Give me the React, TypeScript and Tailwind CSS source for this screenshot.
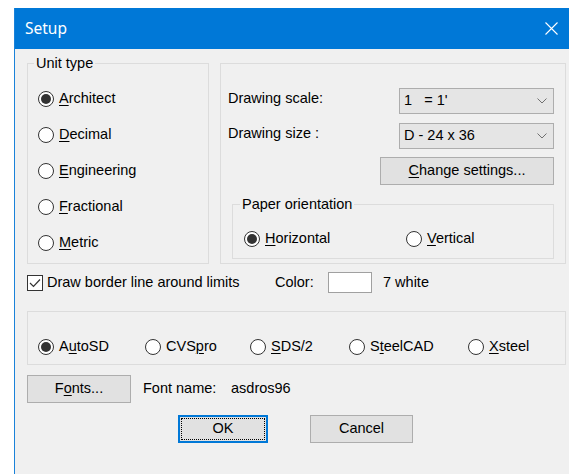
import type { ReactNode } from "react";

// Underlined mnemonic letter, Windows style
function K({ children }: { children: ReactNode }) {
  return <span className="underline decoration-1 underline-offset-[2px]">{children}</span>;
}

function Radio({ checked, children }: { checked?: boolean; children: ReactNode }) {
  return (
    <span className="flex items-center">
      <span className="flex h-[16px] w-[16px] shrink-0 items-center justify-center rounded-full border border-[#333333] bg-white">
        {checked && <span className="h-[10px] w-[10px] rounded-full bg-[#333333]" />}
      </span>
      <span className="ml-[5px] whitespace-nowrap">{children}</span>
    </span>
  );
}

function Dropdown({ value }: { value: string }) {
  return (
    <div className="flex h-[26px] w-[155px] items-center justify-between border border-[#adadad] bg-[#e5e5e5] pl-[4px] pr-[6px]">
      <span className="whitespace-pre">{value}</span>
      <svg width="10" height="6" viewBox="0 0 10 6" fill="none">
        <path d="M0.5 0.5 L5 5 L9.5 0.5" stroke="#707070" strokeWidth="1" />
      </svg>
    </div>
  );
}

function Button({ className, children }: { className: string; children: ReactNode }) {
  return (
    <div className={`flex h-[28px] items-center justify-center border border-[#adadad] bg-[#e1e1e1] ${className}`}>
      {children}
    </div>
  );
}

export default function App() {
  return (
    <div className="h-[474px] overflow-hidden bg-white pl-[14px] pt-[8px] font-['Liberation_Sans',Arial,sans-serif] text-[14.5px] text-black">
      <div className="flex h-full flex-col border-l border-[#1a82d9]">
        {/* title bar */}
        <div className="flex h-[41px] shrink-0 items-center justify-between bg-[#0078d7] pl-[10px] pr-[11px] text-white">
          <span className="font-['Noto_Sans',sans-serif] text-[15.5px]">Setup</span>
          <svg width="13" height="13" viewBox="0 0 13 13" fill="none">
            <path d="M0.5 0.5 L12.5 12.5 M12.5 0.5 L0.5 12.5" stroke="white" strokeWidth="1.1" />
          </svg>
        </div>

        <div className="flex flex-1 flex-col bg-[#f0f0f0] pl-[12px] pt-[6px]">
          <div className="flex items-start gap-[11px]">
            <fieldset className="h-[209px] w-[182px] border border-[#dcdcdc] px-[6px]">
              <legend className="px-[2px] leading-[16px]">Unit type</legend>
              <div className="ml-[4px] mt-[10px] flex flex-col">
                <div className="flex h-[36px] items-center">
                  <Radio checked>
                    <K>A</K>rchitect
                  </Radio>
                </div>
                <div className="flex h-[36px] items-center">
                  <Radio>
                    <K>D</K>ecimal
                  </Radio>
                </div>
                <div className="flex h-[36px] items-center">
                  <Radio>
                    <K>E</K>ngineering
                  </Radio>
                </div>
                <div className="flex h-[36px] items-center">
                  <Radio>
                    <K>F</K>ractional
                  </Radio>
                </div>
                <div className="flex h-[36px] items-center">
                  <Radio>
                    <K>M</K>etric
                  </Radio>
                </div>
              </div>
            </fieldset>

            <div className="mt-[8px] flex h-[201px] w-[346px] flex-col border border-[#dcdcdc] pl-[7px] pr-[11px] pt-[24px]">
              <div className="flex items-center justify-between">
                <span className="mb-[4px]">Drawing scale:</span>
                <Dropdown value="1   = 1'" />
              </div>
              <div className="mt-[9px] flex items-center justify-between">
                <span className="mb-[4px]">Drawing size :</span>
                <Dropdown value="D - 24 x 36" />
              </div>
              <div className="mt-[8px] flex justify-end">
                <Button className="h-[27px] w-[174px]">
                  <span>
                    <K>C</K>hange settings...
                  </span>
                </Button>
              </div>
              <fieldset className="ml-[4px] mt-[11px] h-[63px] border border-[#dcdcdc] px-[7px]">
                <legend className="px-[2px] leading-[16px]">Paper orientation</legend>
                <div className="ml-[4px] mt-[14px] flex h-[26px] items-center">
                  <div className="w-[162px]">
                    <Radio checked>
                      <K>H</K>orizontal
                    </Radio>
                  </div>
                  <Radio>
                    <K>V</K>ertical
                  </Radio>
                </div>
              </fieldset>
            </div>
          </div>

          {/* border line option and colour */}
          <div className="mt-[8px] flex h-[21px] items-center">
            <div className="flex w-[248px] items-center">
              <span className="flex h-[16px] w-[16px] items-center justify-center border border-[#333333] bg-white">
                <svg width="12" height="10" viewBox="0 0 12 10" fill="none">
                  <path d="M1 5 L4.5 8.5 L11 1.5" stroke="#333333" strokeWidth="1.2" />
                </svg>
              </span>
              <span className="ml-[4px] whitespace-nowrap">Draw border line around limits</span>
            </div>
            <span className="w-[53px]">Color:</span>
            <span className="h-[21px] w-[44px] border border-[#a0a0a0] bg-white" />
            <span className="ml-[11px]">7 white</span>
          </div>

          {/* target program */}
          <div className="mt-[18px] flex h-[54px] w-[539px] items-end border border-[#dcdcdc] pb-[6px] pl-[10px]">
            <div className="w-[107px]">
              <Radio checked>
                A<K>u</K>toSD
              </Radio>
            </div>
            <div className="w-[105px]">
              <Radio>
                CVS<K>p</K>ro
              </Radio>
            </div>
            <div className="w-[99px]">
              <Radio>
                <K>S</K>DS/2
              </Radio>
            </div>
            <div className="w-[119px]">
              <Radio>
                S<K>t</K>eelCAD
              </Radio>
            </div>
            <Radio>
              <K>X</K>steel
            </Radio>
          </div>

          <div className="mt-[10px] flex items-center">
            <Button className="w-[104px]">
              <span>
                F<K>o</K>nts...
              </span>
            </Button>
            <span className="ml-[12px] w-[88px]">Font name:</span>
            <span>asdros96</span>
          </div>

          <div className="mt-[12px] flex">
            <div className="ml-[151px] flex h-[28px] w-[90px] border-2 border-[#0078d7] bg-[#e1e1e1] p-[1px]">
              <div className="flex flex-1 items-center justify-center border border-dotted border-black">OK</div>
            </div>
            <Button className="ml-[42px] w-[103px]">Cancel</Button>
          </div>
        </div>
      </div>
    </div>
  );
}
